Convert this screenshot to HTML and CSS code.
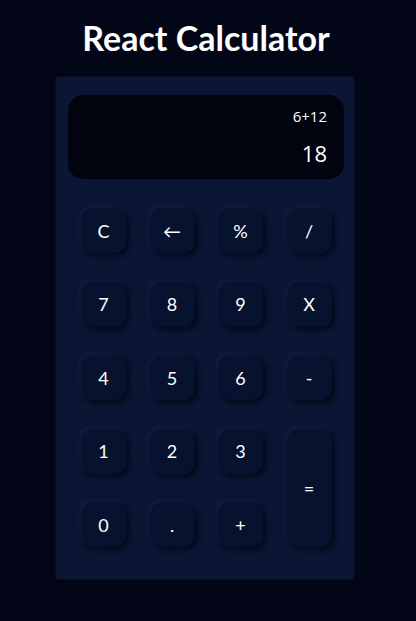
FILE: index.html
```html
<!DOCTYPE html>
<html lang="en">
<head>
<meta charset="utf-8">
<title>React Calculator</title>
<link rel="stylesheet" href="styles.css">
</head>
<body>
<h1 class="title">React Calculator</h1>
<div class="calc">
  <div class="display">
    <div class="expr">6+12</div>
    <div class="result">18</div>
  </div>
  <div class="keys">
    <button class="key">C</button>
    <button class="key">&larr;</button>
    <button class="key">%</button>
    <button class="key">/</button>
    <button class="key">7</button>
    <button class="key">8</button>
    <button class="key">9</button>
    <button class="key">X</button>
    <button class="key">4</button>
    <button class="key">5</button>
    <button class="key">6</button>
    <button class="key">-</button>
    <button class="key">1</button>
    <button class="key">2</button>
    <button class="key">3</button>
    <button class="key equals">=</button>
    <button class="key">0</button>
    <button class="key">.</button>
    <button class="key">+</button>
  </div>
</div>
</body>
</html>
```
FILE: styles.css
```css
html, body {
  margin: 0;
  padding: 0;
  background: #020617;
  height: 100%;
}
body {
  font-family: "Lato", "Noto Sans", sans-serif;
  color: #ffffff;
}
.title {
  margin: 0;
  padding-top: 18px;
  padding-right: 4px;
  height: 77px;
  box-sizing: border-box;
  line-height: 40px;
  text-align: center;
  font-size: 34px;
  font-weight: 700;
  color: #ffffff;
}
.calc {
  margin-left: 56px;
  width: 298px;
  height: 502px;
  box-sizing: border-box;
  background: #0a1633;
  border-radius: 2px;
  box-shadow: 0 0 3px rgba(30, 40, 70, 0.5);
  padding: 18px 10px 0 12px;
}
.display {
  height: 84px;
  background: #01040f;
  border-radius: 15px;
  box-sizing: border-box;
  padding: 9px 17px 0 0;
  display: flex;
  flex-direction: column;
  align-items: flex-end;
  font-family: "Open Sans", "Noto Sans", sans-serif;
}
.expr {
  font-size: 15px;
  line-height: 24px;
}
.result {
  font-size: 22px;
  line-height: 30px;
  margin-top: 10px;
}
.keys {
  margin: 29px 0 0 13px;
  display: grid;
  grid-template-columns: repeat(4, 45px);
  grid-auto-rows: 45px;
  column-gap: 23.5px;
  row-gap: 28.5px;
}
.key {
  background: #07122f;
  border: none;
  border-radius: 12px;
  color: #ffffff;
  font-family: "Lato", "Noto Sans", sans-serif;
  font-size: 18px;
  padding: 0;
  box-shadow: 3px 3px 5px rgba(2, 6, 20, 0.8), -2px -2px 4px rgba(40, 55, 95, 0.25);
}
.equals {
  grid-column: 4;
  grid-row: 4 / span 2;
}
```
